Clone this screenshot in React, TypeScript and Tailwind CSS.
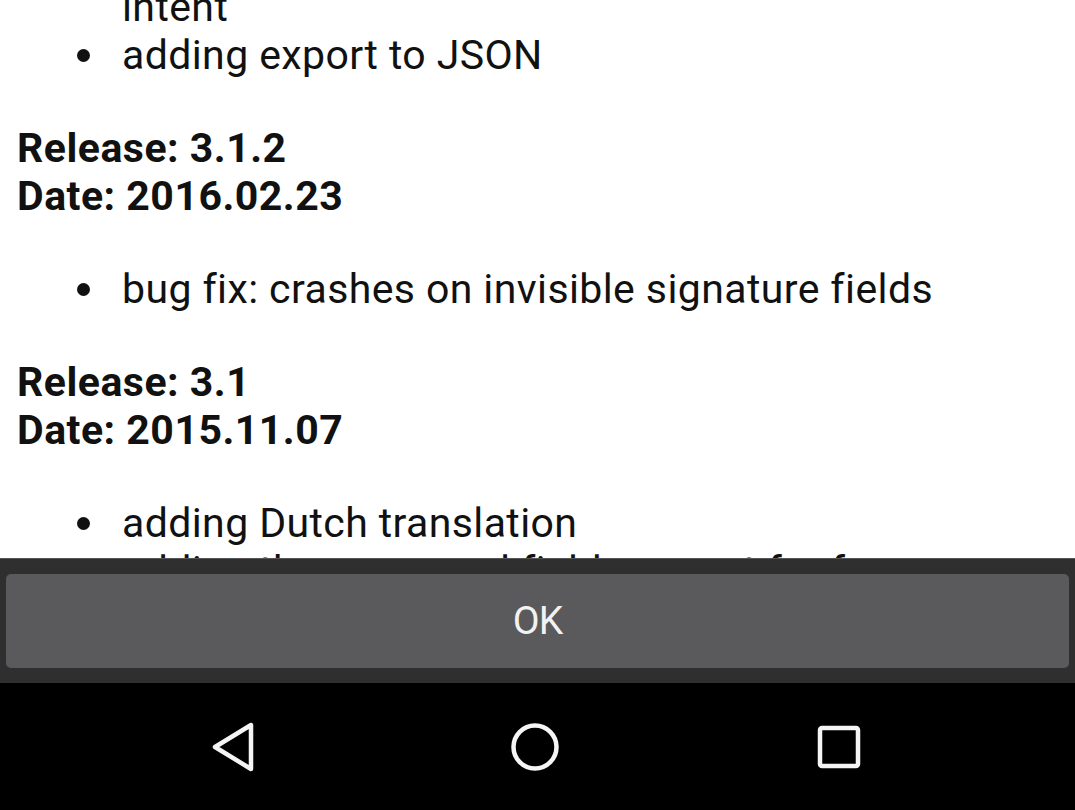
import React from "react";

function Bullet({ children }: { children: React.ReactNode }) {
  return (
    <div className="flex items-center">
      <span className="w-[105px] shrink-0 flex justify-end pr-[32px]">
        <span className="block w-[13px] h-[13px] rounded-full bg-[#111]" />
      </span>
      <span>{children}</span>
    </div>
  );
}

export default function App() {
  return (
    <div
      className="w-[1075px] h-[810px] flex flex-col bg-white overflow-hidden"
      style={{ fontFamily: "Roboto, 'Liberation Sans', sans-serif" }}
    >
      <div className="h-[558px] overflow-hidden text-[41px] leading-[48px] tracking-[0.4px] text-[#111]">
        <div className="mt-[-17px] pl-[17px] flex flex-col gap-[45px]">
          <div>
            <div className="pl-[105px]">intent</div>
            <Bullet>adding export to JSON</Bullet>
          </div>
          <div className="font-bold tracking-[0.5px]">
            <div>Release: 3.1.2</div>
            <div>Date: 2016.02.23</div>
          </div>
          <div>
            <Bullet>bug fix: crashes on invisible signature fields</Bullet>
          </div>
          <div className="font-bold tracking-[0.5px]">
            <div>Release: 3.1</div>
            <div>Date: 2015.11.07</div>
          </div>
          <div>
            <Bullet>adding Dutch translation</Bullet>
            <Bullet>adding the password field support for forms</Bullet>
          </div>
        </div>
      </div>
      <div className="h-[125px] bg-[#2f2f30] border-t border-[#555] px-[6px] pt-[15px] pb-[15px]">
        <div className="h-[94px] rounded-[5px] bg-[#5a5a5c] flex items-center justify-center text-[#f2f2f2] text-[39px] font-normal tracking-[-1px]">
          OK
        </div>
      </div>
      <div className="flex-1 bg-black flex items-center justify-center gap-[244px] pr-[6px]">
        <svg width="60" height="60" viewBox="0 0 60 60">
          <path d="M50 8 L50 52 L14 30 Z" fill="none" stroke="#f5f5f5" strokeWidth="4.5" strokeLinejoin="round" />
        </svg>
        <svg width="60" height="60" viewBox="0 0 60 60">
          <circle cx="30" cy="30" r="21.5" fill="none" stroke="#f5f5f5" strokeWidth="4.5" />
        </svg>
        <svg width="60" height="60" viewBox="0 0 60 60">
          <rect x="11" y="11" width="38" height="38" rx="2" fill="none" stroke="#f5f5f5" strokeWidth="4.5" />
        </svg>
      </div>
    </div>
  );
}
